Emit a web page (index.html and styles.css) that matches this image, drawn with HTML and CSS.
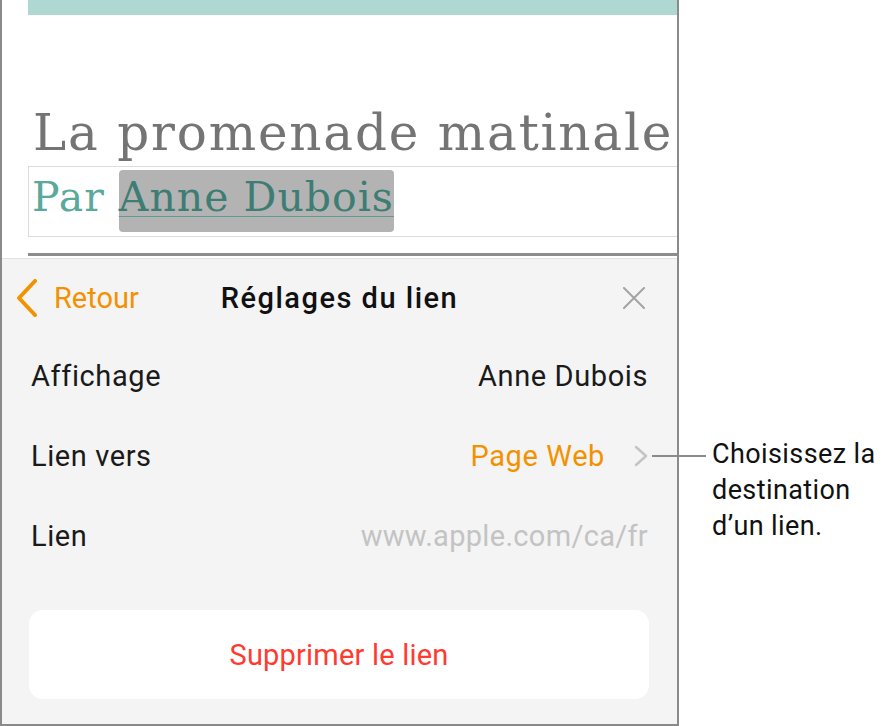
FILE: index.html
```html
<!DOCTYPE html>
<html lang="fr">
<head>
    <meta charset="UTF-8">
    <title>Réglages du lien</title>
    <link rel="stylesheet" href="styles.css">
</head>
<body>
    <div class="page">
        <div class="device">
            <!-- document -->
            <div class="doc">
                <div class="doc-bar"></div>
                <h1 class="doc-title">La promenade matinale</h1>
                <div class="doc-byline">
                    <span class="byline-par">Par&nbsp;</span>
                    <span class="byline-sel"><span class="byline-link">Anne Dubois</span></span>
                </div>
                <div class="doc-rule"></div>
            </div>

            <!-- panneau des réglages -->
            <div class="panel">
                <div class="panel-header">
                    <div class="back">
                        <svg class="back-icon" width="22" height="38" viewBox="0 0 22 38">
                            <path d="M19 2 L3 19 L19 36" fill="none" stroke="#f39200" stroke-width="4" stroke-linecap="round" stroke-linejoin="round"/>
                        </svg>
                        <span class="back-text">Retour</span>
                    </div>
                    <div class="panel-title">Réglages du lien</div>
                    <div class="close">
                        <svg width="22" height="22" viewBox="0 0 22 22">
                            <path d="M1 1 L21 21 M21 1 L1 21" stroke="#a3a3a3" stroke-width="2" stroke-linecap="round"/>
                        </svg>
                    </div>
                </div>

                <div class="row">
                    <span class="row-label">Affichage</span>
                    <span class="row-value">Anne Dubois</span>
                </div>
                <div class="row">
                    <span class="row-label">Lien vers</span>
                    <span class="row-value accent">Page Web</span>
                    <svg class="row-chevron" width="14" height="22" viewBox="0 0 14 22">
                        <path d="M2 2 L12 11 L2 20" fill="none" stroke="#c4c4c8" stroke-width="2.5" stroke-linecap="round" stroke-linejoin="round"/>
                    </svg>
                </div>
                <div class="row">
                    <span class="row-label">Lien</span>
                    <span class="row-value muted">www.apple.com/ca/fr</span>
                </div>

                <div class="delete-button">Supprimer le lien</div>
            </div>
        </div>

        <!-- légende -->
        <div class="callout">
            <div class="callout-line"></div>
            <p class="callout-text">Choisissez la<br>destination<br>d’un lien.</p>
        </div>
    </div>
</body>
</html>
```

FILE: styles.css
```css
/* page */
body {
    margin: 0;
    background-color: #fff;
    font-family: Roboto, "Liberation Sans", sans-serif;
}

.page {
    display: flex;
    align-items: flex-start;
}

/* cadre de l'appareil */
.device {
    width: 679px;
    height: 726px;
    box-sizing: border-box;
    border-left: 2px solid #8a8a8a;
    border-right: 2px solid #8a8a8a;
    border-bottom: 2px solid #8a8a8a;
    display: flex;
    flex-direction: column;
    overflow: hidden;
}

/* document */
.doc {
    padding-left: 26px;
}

.doc-bar {
    height: 15px;
    background-color: #b0d8d3;
}

.doc-title {
    margin: 88px 0 0 0;
    padding-left: 5px;
    font-family: "DejaVu Serif", serif;
    font-weight: normal;
    font-size: 50px;
    line-height: 60px;
    letter-spacing: 1.8px;
    color: #747474;
    white-space: nowrap;
}

.doc-byline {
    margin-top: 3px;
    height: 71px;
    box-sizing: border-box;
    border: 1px solid #dcdcdc;
    border-right: none;
    padding: 3px 0 0 3px;
    display: flex;
    align-items: baseline;
    font-family: "DejaVu Serif", serif;
    font-size: 41px;
    letter-spacing: 1px;
}

.byline-par {
    color: #5aa99b;
    line-height: 54px;
}

.byline-sel {
    display: inline-block;
    height: 62px;
    box-sizing: border-box;
    line-height: 54px;
    padding-bottom: 8px;
    background-color: #b3b3b3;
    border-radius: 4px;
}

.byline-link {
    color: #3e7d73;
    text-decoration: underline;
    text-decoration-color: #5f9a90;
    text-decoration-thickness: 1px;
    text-underline-offset: 5px;
}

.doc-rule {
    margin-top: 16px;
    height: 3px;
    background-color: #8c8c8c;
}

/* panneau */
.panel {
    flex: 1;
    margin-top: 2px;
    border-top: 1px solid #e2e2e2;
    background-color: #f4f4f4;
    display: flex;
    flex-direction: column;
}

.panel-header {
    height: 77px;
    display: grid;
    grid-template-columns: 1fr auto 1fr;
    align-items: center;
    padding: 0 32px;
}

.back {
    margin-left: -18px;
    display: flex;
    align-items: center;
    gap: 16px;
    color: #f39200;
    font-size: 29px;
}

.back-icon {
    display: block;
}

.panel-title {
    font-size: 29px;
    font-weight: 500;
    letter-spacing: 1.5px;
    color: #111;
}

.close {
    justify-self: end;
    display: flex;
}

.row {
    height: 80px;
    display: flex;
    align-items: center;
    padding: 0 29px 0 29px;
    font-size: 29px;
    letter-spacing: 0.6px;
    color: #1a1a1a;
}

.row-label {
    flex: 1;
}

.row-value.accent {
    color: #f39200;
}

.row-value.muted {
    color: #c3c3c3;
    letter-spacing: 0.3px;
}

.row-chevron {
    margin-left: 29px;
}

.delete-button {
    margin: 34px 28px 0 27px;
    height: 89px;
    border-radius: 14px;
    background-color: #fff;
    display: flex;
    align-items: center;
    justify-content: center;
    font-size: 29px;
    letter-spacing: 0.2px;
    color: #ff3b30;
}

/* légende */
.callout {
    position: relative;
    margin-left: 33px;
    padding-top: 436px;
}

.callout-line {
    position: absolute;
    left: -60px;
    top: 455px;
    width: 54px;
    height: 2px;
    background-color: #8a8a8a;
}

.callout-text {
    margin: 0;
    font-size: 27px;
    line-height: 36px;
    letter-spacing: 0.4px;
    color: #111;
}
```
